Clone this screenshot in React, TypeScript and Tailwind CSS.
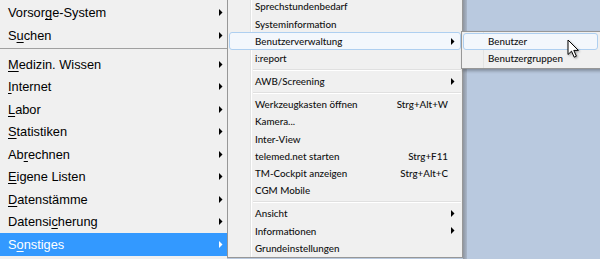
import React from 'react';

type LeftItem = { pre: string; key: string; post: string; active?: boolean };

const leftTop: LeftItem[] = [
  { pre: 'Vorsor', key: 'g', post: 'e-System' },
  { pre: 'S', key: 'u', post: 'chen' },
];

const leftBottom: LeftItem[] = [
  { pre: '', key: 'M', post: 'edizin. Wissen' },
  { pre: '', key: 'I', post: 'nternet' },
  { pre: '', key: 'L', post: 'abor' },
  { pre: '', key: 'S', post: 'tatistiken' },
  { pre: 'Ab', key: 'r', post: 'echnen' },
  { pre: '', key: 'E', post: 'igene Listen' },
  { pre: '', key: 'D', post: 'atenstämme' },
  { pre: 'Datensi', key: 'c', post: 'herung' },
  { pre: 'S', key: 'o', post: 'nstiges', active: true },
];

type MidItem = { label: string; shortcut?: string; sub?: boolean; hover?: boolean } | 'sep';

const midItems: MidItem[] = [
  { label: 'Sprechstundenbedarf' },
  { label: 'Systeminformation' },
  { label: 'Benutzerverwaltung', sub: true, hover: true },
  { label: 'i:report' },
  'sep',
  { label: 'AWB/Screening', sub: true },
  'sep',
  { label: 'Werkzeugkasten öffnen', shortcut: 'Strg+Alt+W' },
  { label: 'Kamera...' },
  { label: 'Inter-View' },
  { label: 'telemed.net starten', shortcut: 'Strg+F11' },
  { label: 'TM-Cockpit anzeigen', shortcut: 'Strg+Alt+C' },
  { label: 'CGM Mobile' },
  'sep',
  { label: 'Ansicht', sub: true },
  { label: 'Informationen', sub: true },
  { label: 'Grundeinstellungen' },
];

const Arrow = ({ white }: { white?: boolean }) => (
  <svg width="4" height="7" viewBox="0 0 4 7" className="shrink-0">
    <path d="M0 0 L3.5 3.5 L0 7 Z" fill={white ? '#ffffff' : '#000000'} />
  </svg>
);

const LeftRow = ({ item }: { item: LeftItem }) => (
  <div
    className={`h-[22.5px] flex items-center justify-between pl-[8px] pr-[4px] ${
      item.active ? 'bg-[#3399ff] text-white' : 'text-black'
    }`}
  >
    <span>
      {item.pre}
      <span className="underline underline-offset-[2px]">{item.key}</span>
      {item.post}
    </span>
    <Arrow white={item.active} />
  </div>
);

const Cursor = () => (
  <svg width="14" height="20" viewBox="0 0 14 20" className="absolute left-[567px] top-[39px] drop-shadow-[1px_1px_1px_rgba(0,0,0,0.35)]">
    <path
      d="M1 1 L1 15.5 L4.5 12.2 L7.2 18.2 L9.4 17.2 L6.8 11.4 L11.4 11.4 Z"
      fill="#ffffff"
      stroke="#000000"
      strokeWidth="1"
      strokeLinejoin="round"
    />
  </svg>
);

export default function App() {
  return (
    <div className="relative w-[600px] h-[259px] overflow-hidden flex bg-[#b9c9df]">
      {/* Hauptmenü */}
      <div className="w-[227px] shrink-0 bg-[#f0f0f0] pt-[1.5px] text-[12.8px] font-['Liberation_Sans',Arial,sans-serif]">
        {leftTop.map((it) => (
          <LeftRow key={it.pre + it.key} item={it} />
        ))}
        <div className="h-[6.5px] flex flex-col justify-center">
          <div className="h-px bg-[#a0a0a0] mt-[-2px]" />
        </div>
        {leftBottom.map((it) => (
          <LeftRow key={it.pre + it.key} item={it} />
        ))}
      </div>

      {/* Untermenü Sonstiges */}
      <div className="relative w-[236px] h-[258px] shrink-0 bg-[#f0f0f0] border-l border-r border-b border-[#979797] text-[9.8px] text-[#111] font-['Lato',sans-serif] font-medium">
        <div className="absolute left-[22px] top-0 bottom-0 w-[2px] border-l border-[#e2e3e3]">
          <div className="w-px h-full bg-white" />
        </div>
        <div className="relative flex flex-col mt-[-1.9px] px-[1px]">
          {midItems.map((it, i) =>
            it === 'sep' ? (
              <div key={i} className="h-[6px] flex items-center pl-[24px]">
                <div className="flex-1 flex flex-col">
                  <div className="h-px bg-[#e0e0e0]" />
                  <div className="h-px bg-white" />
                </div>
              </div>
            ) : (
              <div
                key={i}
                className={`h-[17.2px] flex items-center pl-[25px] pr-[5px] rounded-[3px] border ${
                  it.hover ? 'border-[#aecff0] bg-[#f3f7fc]' : 'border-transparent'
                }`}
              >
                <span className="flex-1">{it.label}</span>
                {it.shortcut && <span className="mr-[7px]">{it.shortcut}</span>}
                {it.sub && <Arrow />}
              </div>
            )
          )}
        </div>
      </div>

      {/* Schatten */}
      <div className="w-[4px] h-[259px] shrink-0 bg-gradient-to-r from-[#8e959f] to-[#a9b6c9]" />

      {/* Hintergrund */}
      <div className="flex-1" />

      {/* Untermenü Benutzerverwaltung */}
      <div className="absolute left-[461px] top-[31px] w-[150px] h-[38px] bg-[#f0f0f0] border border-[#979797] shadow-[2px_2px_3px_rgba(0,0,0,0.3)] text-[9.8px] text-[#111] font-['Lato',sans-serif] font-medium py-[1px] px-[1px]">
        <div className="absolute left-[21px] top-0 bottom-0 w-[2px] border-l border-[#e2e3e3]" />
        <div className="relative flex flex-col">
          <div className="h-[17.2px] w-[135px] flex items-center pl-[24px] rounded-[3px] border border-[#aecff0] bg-[#f3f7fc]">
            Benutzer
          </div>
          <div className="h-[17.2px] flex items-center pl-[24px] border border-transparent">Benutzergruppen</div>
        </div>
      </div>

      <Cursor />
    </div>
  );
}
